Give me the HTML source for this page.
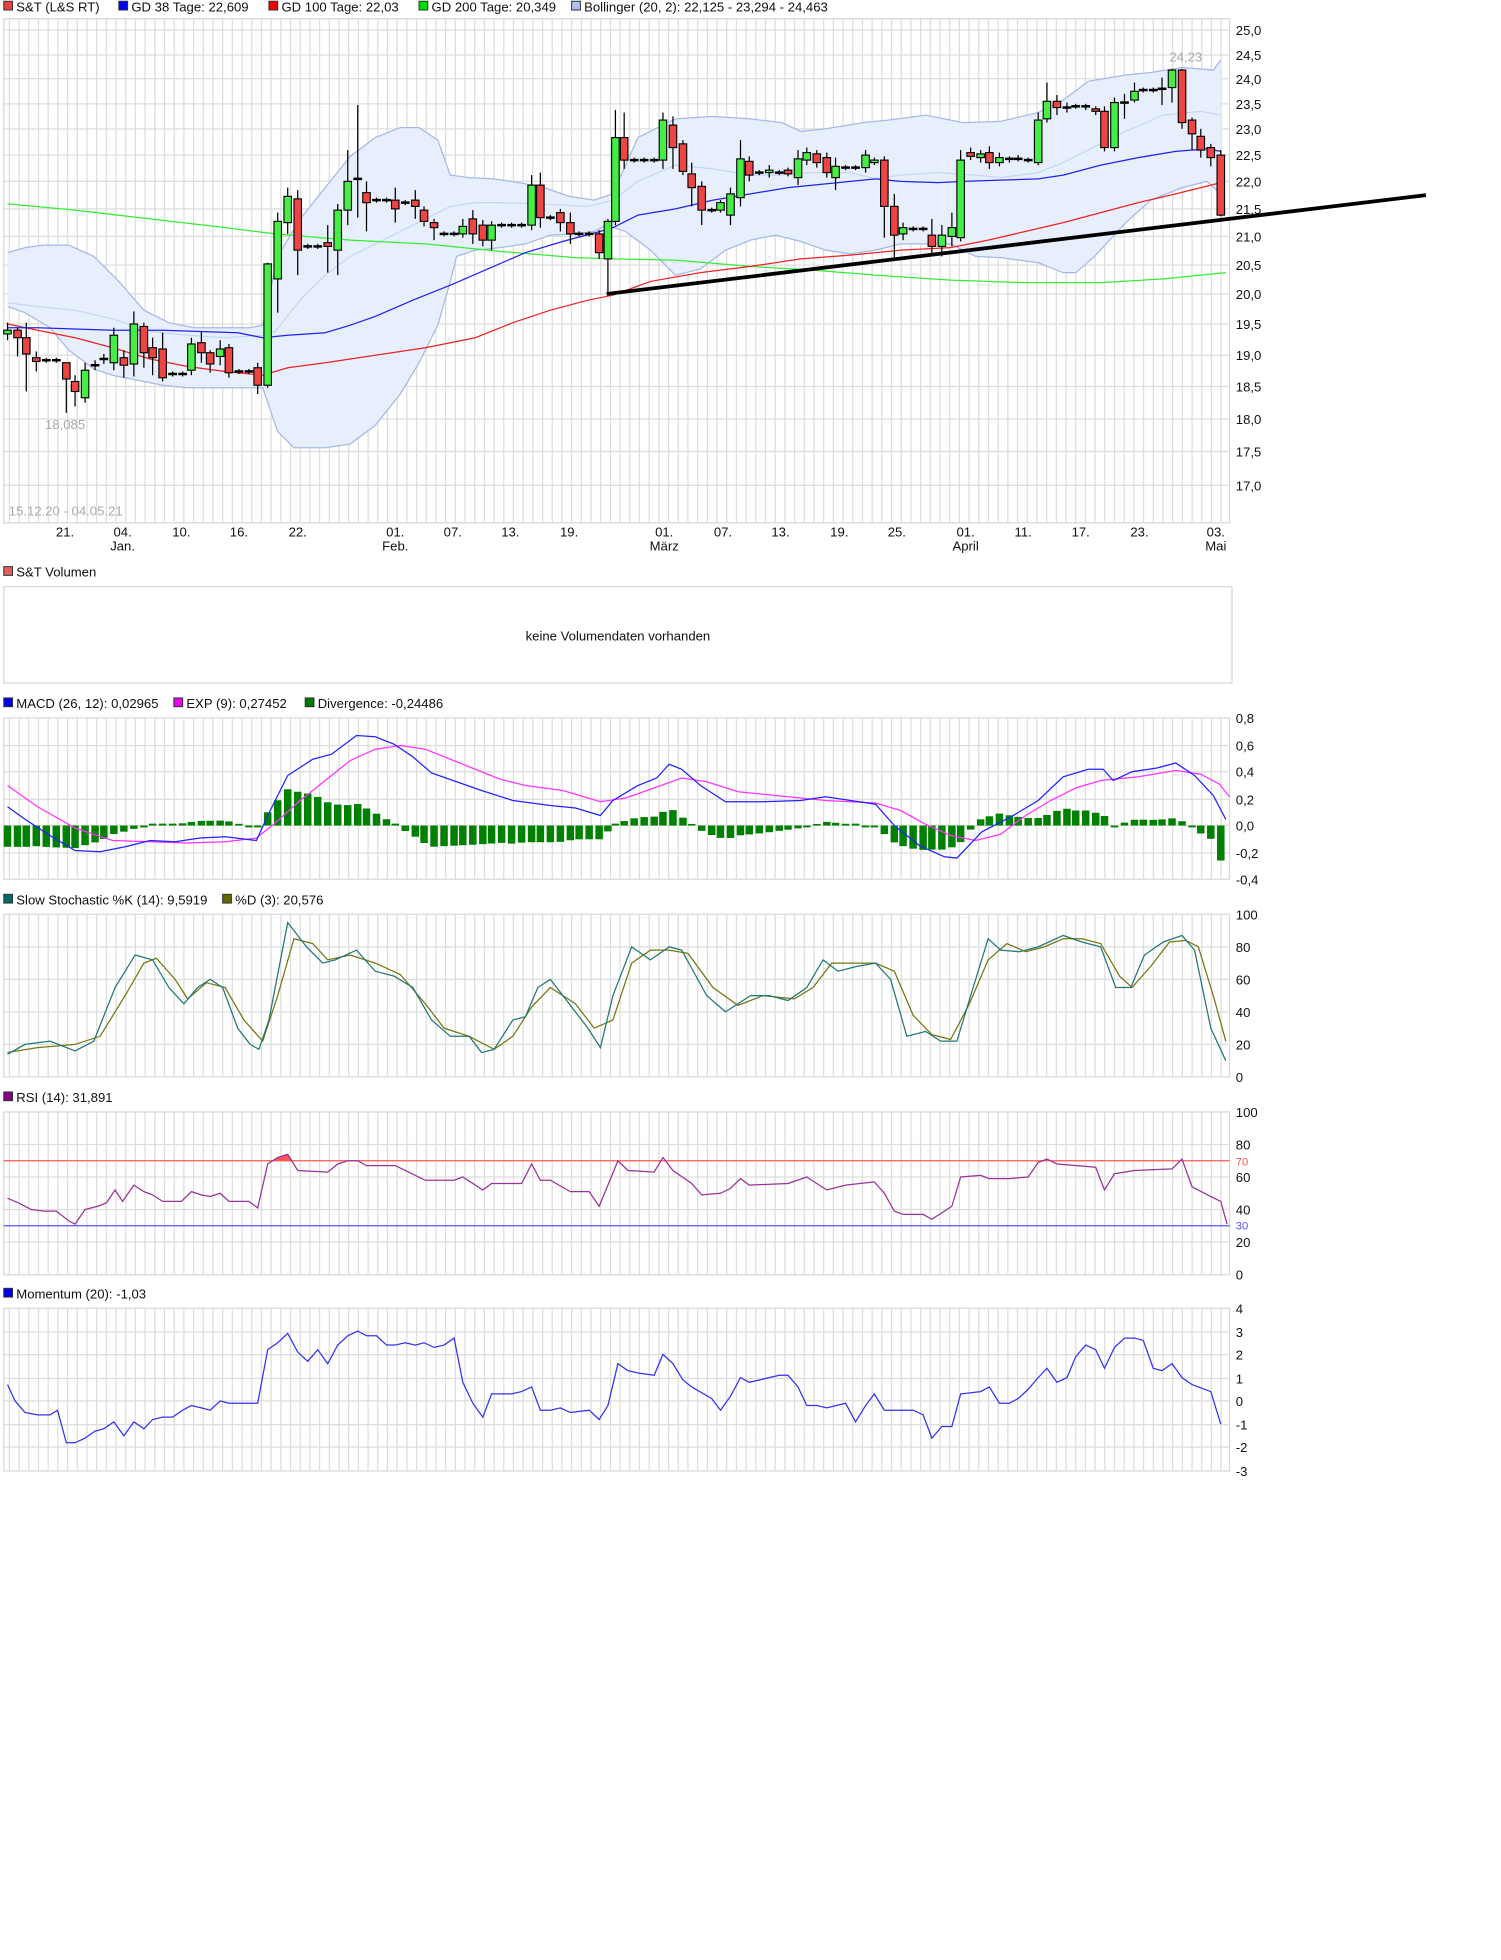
<!DOCTYPE html>
<html><head><meta charset="utf-8"><style>
html,body{margin:0;padding:0;background:#fff;}
svg{display:block;}
text{font-family:"Liberation Sans",Arial,sans-serif;font-size:10.5px;fill:#111;}
</style></head><body>
<svg id="s" width="1501" height="1960" viewBox="0 0 1200 1567" xmlns="http://www.w3.org/2000/svg"></svg>
<script>
var S=document.getElementById('s'),o=[];
function add(t){o.push(t);}
function rect(x,y,w,h,f,st,sw){add('<rect x="'+x+'" y="'+y+'" width="'+w+'" height="'+h+'" fill="'+f+'"'+(st?' stroke="'+st+'" stroke-width="'+(sw||1)+'"':'')+'/>');}
function line(x1,y1,x2,y2,c,w){add('<line x1="'+x1+'" y1="'+y1+'" x2="'+x2+'" y2="'+y2+'" stroke="'+c+'" stroke-width="'+(w||1)+'"/>');}
function txt(x,y,s,c,a,fs){add('<text x="'+x+'" y="'+y+'"'+(c?' style="fill:'+c+(fs?';font-size:'+fs+'px':'')+'"':'')+(a?' text-anchor="'+a+'"':'')+'>'+s+'</text>');}
function pl(pts,c,w,fill){add('<polyline points="'+pts.map(function(p){return p[0]+','+p[1]}).join(' ')+'" fill="'+(fill||'none')+'" stroke="'+c+'" stroke-width="'+(w||1)+'"/>');}
function legend(y,items){var x=3;items.forEach(function(it){rect(x,y-8,7,7,it[1],'#333',0.8);txt(x+10,y,it[0]);x+=it[2];});}
function grid(y0,y1,hl){
 rect(3,y0,980,y1-y0,'#fff','#d8d8d8',1);
 for(var x=7.5;x<983;x+=7.75) line(x,y0,x,y1,'#ddd',1);
 hl.forEach(function(h){line(3,h,983,h,'#ddd',1);});
}
function interp(a,x){for(var i=0;i<a.length-1;i++){if(x<=a[i+1][0]){var t=(x-a[i][0])/(a[i+1][0]-a[i][0]);return a[i][1]+t*(a[i+1][1]-a[i][1]);}}return a[a.length-1][1];}
// ===== main
legend(9,[['S&amp;T (L&amp;S RT)','#e84040',92],['GD 38 Tage: 22,609','#0000ee',120],['GD 100 Tage: 22,03','#ee0000',120],['GD 200 Tage: 20,349','#00dd00',122],['Bollinger (20, 2): 22,125 - 23,294 - 24,463','#aac0ee',250]]);
var yl=[[24,'25,0'],[44,'24,5'],[63,'24,0'],[83,'23,5'],[103,'23,0'],[124,'22,5'],[145,'22,0'],[167,'21,5'],[189,'21,0'],[212,'20,5'],[235,'20,0'],[259,'19,5'],[284,'19,0'],[309,'18,5'],[335,'18,0'],[361,'17,5'],[388,'17,0']];
grid(15,418,yl.map(function(a){return a[0]}));
yl.forEach(function(a){txt(988,a[0]+4,a[1]);});
var xl=[[52,'21.'],[98,'04.','Jan.'],[145,'10.'],[191,'16.'],[238,'22.'],[316,'01.','Feb.'],[362,'07.'],[408,'13.'],[455,'19.'],[531,'01.','März'],[578,'07.'],[624,'13.'],[671,'19.'],[717,'25.'],[772,'01.','April'],[818,'11.'],[864,'17.'],[911,'23.'],[972,'03.','Mai']];
xl.forEach(function(a){txt(a[0],429,a[1],null,'middle');if(a[2])txt(a[0],440,a[2],null,'middle');});
var bu=[[6,202],[20,198],[35,196],[55,196],[75,205],[95,225],[115,248],[135,258],[155,262],[175,262],[200,262],[210,260],[222,205],[240,175],[260,150],[280,125],[300,110],[320,102],[335,102],[350,112],[360,140],[375,142],[395,143],[415,146],[435,150],[455,157],[475,160],[490,155],[510,110],[540,95],[570,93],[600,95],[625,98],[640,105],[660,103],[690,98],[710,96],[740,92],[770,98],[800,97],[830,90],[850,80],[870,65],[900,60],[920,58],[945,54],[970,56],[976,48]];
var bl=[[6,245],[20,250],[40,262],[55,280],[75,295],[90,300],[110,304],[130,308],[150,310],[175,310],[195,310],[210,310],[222,345],[235,358],[260,358],[280,355],[300,340],[320,315],[335,290],[350,260],[360,225],[365,205],[380,200],[400,198],[420,195],[440,188],[460,187],[475,185],[485,180],[500,185],[520,200],[540,220],[560,215],[580,200],[600,192],[620,188],[640,193],[660,200],[680,203],[700,200],[720,195],[740,195],[760,195],[780,205],[800,206],[830,210],[850,218],[860,218],[875,205],[900,178],[920,160],[945,150],[965,145],[976,155]];
add('<polygon points="'+bu.concat(bl.slice().reverse()).map(function(p){return p[0]+','+p[1]}).join(' ')+'" fill="#e8effc" stroke="none"/>');
pl(bu,'#a5b9e6',1);pl(bl,'#a5b9e6',1);
pl([[6,242],[30,245],[60,248],[90,255],[120,265],[150,268],[180,270],[210,268],[220,265],[240,240],[260,220],[280,205],[300,195],[320,185],[340,175],[360,165],[380,162],[400,162],[430,163],[470,165],[490,160],[510,145],[540,132],[570,135],[600,140],[620,140],[650,138],[680,138],[700,143],[720,140],[750,138],[780,140],[800,142],[830,138],[850,130],[870,120],[900,105],[930,92],[960,89],[976,92]],'#c5d6f5',1);
pl([[6,163],[60,168],[120,175],[180,182],[220,187],[280,192],[340,195],[400,201],[460,206],[490,207],[540,208],[600,213],[650,216],[700,220],[760,224],[820,226],[880,226],[930,223],[980,218]],'#33ee33',1);
pl([[6,259],[30,264],[60,270],[90,278],[120,287],[150,293],[180,297],[210,300],[230,294],[260,290],[300,284],[340,278],[380,270],[410,258],[440,248],[470,240],[490,236],[520,225],[560,218],[600,213],[640,207],[680,204],[720,200],[760,198],[790,192],[820,185],[850,178],[880,170],[910,162],[940,155],[960,150],[976,146]],'#ee2222',1);
pl([[6,262],[30,262],[60,263],[90,264],[130,264],[160,265],[190,266],[210,270],[230,268],[260,266],[280,260],[300,253],[330,240],[360,228],[390,215],[420,202],[450,193],[480,185],[490,182],[510,172],[540,167],[570,160],[600,155],[630,150],[660,147],[690,144],[700,143],[720,145],[750,146],[770,145],[800,144],[830,143],[850,140],[880,132],[910,126],[940,121],[965,119],[976,121]],'#2222ee',1);
// candles: x, open, close, high, low (y px)
var C=[[6,267,264,258,272],[14,264,270,262,285],[21,270,283,258,313],[29,286,289,281,297],[37,288,288,286,290],[45,288,288,286,290],[53,290,303,290,330],[60,305,313,300,325],[68,318,296,290,322],[76,292,292,288,296],[83,287,287,283,291],[91,290,268,262,296],[99,286,292,280,302],[107,291,259,249,301],[115,261,282,258,294],[122,278,286,270,300],[130,279,302,266,305],[138,299,299,297,301],[146,299,299,297,301],[153,296,275,270,300],[161,274,282,265,290],[168,282,291,280,298],[176,285,279,272,292],[183,278,298,275,302],[191,297,297,295,299],[199,297,297,295,299],[206,294,308,290,315],[214,308,211,210,310],[222,223,177,170,250],[230,178,157,150,187],[238,159,200,152,220],[246,197,197,195,199],[254,197,197,195,199],[262,194,197,180,218],[270,200,168,163,220],[278,168,145,120,180],[286,143,143,84,174],[293,154,162,145,185],[301,160,160,158,162],[309,160,160,158,162],[316,160,167,150,178],[324,162,162,160,164],[332,160,165,152,175],[339,168,177,165,181],[347,178,182,175,192],[355,187,187,185,189],[363,187,187,185,189],[370,187,181,175,190],[378,175,187,168,195],[386,180,192,176,197],[393,192,180,177,200],[401,180,180,178,182],[409,180,180,178,182],[417,180,180,178,182],[425,180,148,140,184],[432,148,174,138,182],[440,174,174,172,176],[448,170,178,167,185],[456,178,187,170,195],[463,187,187,185,189],[471,187,187,185,189],[479,187,202,184,207],[486,207,177,175,235],[492,177,110,88,180],[499,110,128,90,135],[507,128,128,126,130],[515,128,128,126,130],[523,128,128,126,130],[530,128,96,90,135],[538,100,118,93,135],[546,115,137,112,140],[553,139,150,130,165],[561,149,168,145,180],[569,168,168,166,170],[576,168,162,160,170],[584,172,155,150,180],[592,158,127,112,165],[599,129,140,125,145],[607,138,138,136,140],[615,138,136,132,142],[623,138,138,136,140],[630,136,139,134,141],[638,142,127,120,148],[645,128,122,118,132],[653,123,130,120,134],[661,126,138,122,142],[668,142,133,126,152],[676,134,134,132,136],[684,134,134,132,136],[692,134,124,120,138],[699,130,128,126,132],[707,128,165,125,190],[715,165,188,155,208],[722,187,182,178,192],[730,183,183,181,185],[738,183,183,181,185],[745,188,197,175,205],[753,197,188,180,205],[761,189,182,170,197],[768,190,128,120,193],[776,122,125,118,128],[784,126,123,120,130],[791,122,130,117,135],[799,130,126,122,133],[807,127,128,125,130],[814,127,126,124,129],[822,128,128,126,130],[830,130,96,90,132],[837,95,81,66,98],[845,81,86,76,92],[853,86,85,82,90],[860,85,85,83,87],[868,85,86,83,88],[876,87,89,85,92],[883,89,118,85,121],[891,118,82,78,121],[899,82,82,75,95],[907,80,73,66,82],[914,72,72,70,74],[922,72,72,70,74],[929,71,71,62,84],[937,70,56,55,82],[945,56,98,55,103],[953,96,107,94,120],[960,109,120,103,126],[968,118,126,115,133],[976,124,172,120,173]];
C.forEach(function(c){var x=c[0],op=c[1],cl=c[2];line(x,c[3],x,c[4],'#000',1);
 if(Math.abs(op-cl)<1.5){line(x-3.5,op,x+3.5,op,'#000',2);}
 else{var g=cl<op;rect(x-3,Math.min(op,cl),6,Math.abs(op-cl),g?'#44ee44':'#ee4444','#000',0.9);}});
line(485,235,1140,156,'#000',3);
txt(948,49,'24,23','#aaa','middle');txt(52,343,'18,085','#aaa','middle');txt(7,412,'15.12.20 - 04.05.21','#aaa');
// ===== volume
legend(461,[['S&amp;T Volumen','#e06060',100]]);
rect(3,469,982,77,'#fff','#d8d8d8',1);
txt(494,512,'keine Volumendaten vorhanden',null,'middle',11);
// ===== MACD
legend(566,[['MACD (26, 12): 0,02965','#0000ee',136],['EXP (9): 0,27452','#ee00ee',105],['Divergence: -0,24486','#007700',150]]);
var ml=[[574,'0,8'],[596,'0,6'],[617,'0,4'],[639,'0,2'],[660,'0,0'],[682,'-0,2'],[703,'-0,4']];
grid(574,703,ml.map(function(a){return a[0]}));ml.forEach(function(a){txt(988,a[0]+4,a[1]);});
var mb=[[6,645],[20,655],[40,668],[60,680],[80,681],[100,677],[120,672],[140,673],[160,670],[180,669],[205,672],[215,650],[230,620],[250,607],[265,603],[285,588],[300,589],[315,595],[330,605],[345,618],[365,625],[385,632],[410,640],[440,644],[460,646],[480,652],[490,640],[510,628],[525,622],[535,611],[545,615],[560,628],[580,641],[610,641],[640,640],[660,637],[680,640],[700,643],[715,660],[735,676],[755,685],[765,686],[785,665],[810,652],[830,640],[850,621],[870,615],[882,615],[890,624],[905,617],[925,614],[940,610],[955,620],[970,636],[980,655]];
var mm=[[6,628],[30,645],[60,662],[90,672],[120,673],[150,674],[180,673],[205,670],[220,658],[240,640],[260,624],[280,608],[300,599],[320,596],[340,599],[360,607],[380,615],[400,623],[420,628],[450,632],[480,641],[500,638],[520,631],[545,622],[565,625],[590,633],[620,636],[660,640],[700,642],[720,648],[740,659],[760,668],[780,672],[800,667],[820,652],[840,640],[860,630],[880,624],[910,621],[940,616],[960,619],[975,627],[983,637]];
C.forEach(function(c){var x=c[0],d=interp(mb,x)-interp(mm,x);if(x>=970)d=28;if(Math.abs(d)<1)d=d<0?-1.5:1.5;rect(x-3,d<0?660+d:660,6,Math.abs(d),'#008000');});
pl(mm,'#ff33ff',1);pl(mb,'#2222ff',1);
// ===== Stoch
legend(723,[['Slow Stochastic %K (14): 9,5919','#006666',175],['%D (3): 20,576','#666600',120]]);
var sl=[[731,'100'],[757,'80'],[783,'60'],[809,'40'],[835,'20'],[861,'0']];
grid(731,861,sl.map(function(a){return a[0]}));sl.forEach(function(a){txt(988,a[0]+4,a[1]);});
function sv(a){return a.map(function(p){return [p[0],861-p[1]*1.3];});}
var K=[[6,14],[20,20],[40,22],[60,16],[75,22],[92,55],[108,75],[122,72],[135,55],[147,45],[158,55],[168,60],[178,55],[190,30],[200,20],[207,17],[215,35],[230,95],[245,80],[258,70],[268,72],[285,78],[300,65],[315,62],[330,55],[345,35],[360,25],[375,25],[385,15],[395,17],[410,35],[420,37],[430,55],[440,60],[455,45],[470,30],[480,18],[490,50],[505,80],[520,72],[535,80],[545,78],[565,50],[580,40],[600,50],[615,50],[630,47],[645,55],[658,72],[670,65],[685,68],[700,70],[712,60],[725,25],[740,28],[752,22],[765,22],[778,55],[790,85],[800,78],[815,77],[830,80],[850,87],[865,83],[880,80],[892,55],[904,55],[915,75],[930,83],[945,87],[955,78],[968,30],[980,10]];
var D=[[6,15],[30,18],[60,20],[80,25],[100,50],[115,70],[125,73],[140,60],[150,48],[165,58],[180,55],[195,35],[210,22],[222,50],[235,85],[250,82],[262,72],[280,75],[300,70],[320,63],[340,45],[355,30],[375,25],[395,17],[410,25],[425,43],[440,55],[460,45],[475,30],[490,35],[505,70],[520,78],[535,78],[550,76],[570,55],[590,44],[610,50],[635,48],[650,55],[665,70],[680,70],[700,70],[715,65],[730,38],[745,26],[760,23],[775,45],[790,72],[805,82],[820,77],[835,80],[850,85],[865,85],[880,82],[895,62],[905,55],[920,68],[935,83],[948,84],[958,80],[970,50],[980,22]];
pl(sv(D),'#777711',1);pl(sv(K),'#227777',1);
// ===== RSI
legend(881,[['RSI (14): 31,891','#880088',120]]);
var rl=[[889,'100'],[915,'80'],[941,'60'],[967,'40'],[993,'20'],[1019,'0']];
grid(889,1019,rl.map(function(a){return a[0]}));rl.forEach(function(a){txt(988,a[0]+4,a[1]);});
line(3,928,983,928,'#ff5555',1);line(3,980,983,980,'#5555ff',1);
txt(988,932,'70','#ff5555',null,9);txt(988,983,'30','#5555ff',null,9);
add('<polygon points="218,928 222,925.4 230,922.8 234,928" fill="#ff5555"/>');
var R=[[6,47],[15,44],[25,40],[35,39],[45,39],[55,33],[60,31],[68,40],[78,42],[85,44],[92,52],[98,45],[107,55],[115,51],[122,49],[130,45],[145,45],[153,51],[161,49],[168,48],[176,50],[183,45],[199,45],[206,41],[214,68],[222,72],[230,74],[238,64],[262,63],[270,68],[278,70],[286,70],[293,67],[316,67],[324,64],[340,58],[363,58],[370,60],[386,52],[393,56],[417,56],[425,68],[432,58],[440,58],[456,51],[471,51],[479,42],[486,55],[494,70],[502,64],[523,63],[530,72],[538,64],[553,56],[561,49],[576,50],[584,53],[592,59],[599,55],[630,56],[645,60],[661,52],[676,55],[699,57],[707,50],[715,39],[722,37],[738,37],[745,34],[761,42],[768,60],[784,61],[791,59],[807,59],[822,60],[830,69],[837,71],[845,68],[876,66],[883,52],[891,62],[907,64],[937,65],[945,71],[953,54],[968,48],[976,45],[981,31]];
pl(R.map(function(p){return [p[0],1019-p[1]*1.3]}),'#993399',1);
// ===== Momentum
legend(1038,[['Momentum (20): -1,03','#0000ee',150]]);
var mol=[[1046,'4'],[1065,'3'],[1083,'2'],[1102,'1'],[1120,'0'],[1139,'-1'],[1157,'-2'],[1176,'-3']];
grid(1046,1176,mol.map(function(a){return a[0]}));mol.forEach(function(a){txt(988,a[0]+4,a[1]);});
var M=[[6,0.7],[12,0],[20,-0.5],[30,-0.6],[40,-0.6],[46,-0.4],[53,-1.8],[60,-1.8],[68,-1.6],[76,-1.3],[83,-1.2],[91,-0.9],[99,-1.5],[107,-0.9],[115,-1.2],[122,-0.8],[130,-0.7],[138,-0.7],[146,-0.4],[153,-0.2],[161,-0.3],[168,-0.4],[176,0],[183,-0.1],[206,-0.1],[214,2.2],[222,2.5],[230,2.9],[238,2.1],[246,1.7],[254,2.2],[262,1.6],[270,2.4],[278,2.8],[286,3.0],[293,2.8],[301,2.8],[309,2.4],[316,2.4],[324,2.5],[332,2.4],[339,2.5],[347,2.3],[355,2.4],[363,2.7],[370,0.8],[378,-0.1],[386,-0.7],[393,0.3],[409,0.3],[417,0.4],[425,0.6],[432,-0.4],[440,-0.4],[448,-0.3],[456,-0.5],[471,-0.4],[479,-0.8],[486,-0.2],[494,1.6],[502,1.3],[510,1.2],[523,1.1],[530,2.0],[538,1.6],[546,0.9],[553,0.6],[569,0.1],[576,-0.4],[584,0.2],[592,1.0],[599,0.8],[607,0.9],[623,1.1],[630,1.1],[638,0.6],[645,-0.2],[653,-0.2],[661,-0.3],[676,-0.1],[684,-0.9],[692,-0.2],[699,0.3],[707,-0.4],[715,-0.4],[730,-0.4],[738,-0.6],[745,-1.6],[753,-1.1],[761,-1.1],[768,0.3],[784,0.4],[791,0.6],[799,-0.1],[807,-0.1],[814,0.1],[822,0.5],[830,1.0],[837,1.4],[845,0.8],[853,1.0],[860,1.9],[868,2.4],[876,2.2],[883,1.4],[891,2.3],[899,2.7],[907,2.7],[914,2.6],[922,1.4],[929,1.3],[937,1.6],[945,1.0],[953,0.7],[968,0.4],[976,-1.0]];
pl(M.map(function(p){return [p[0],1120-p[1]*18.6]}),'#3333ee',1);
S.innerHTML=o.join('');
</script>
</body></html>
